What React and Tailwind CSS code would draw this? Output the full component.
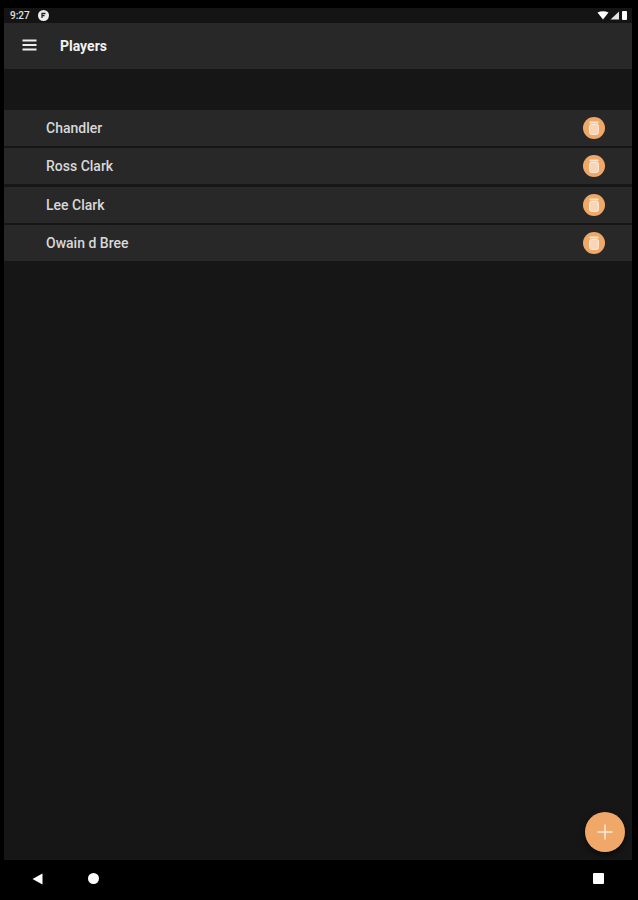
import React from 'react'

const PLAYERS = ['Chandler', 'Ross Clark', 'Lee Clark', 'Owain d Bree']

function DeleteBadge() {
  return (
    <span className="w-[22px] h-[22px] rounded-full bg-[#f0a868] flex items-center justify-center shrink-0">
      <svg width="14" height="16" viewBox="0 0 14 16">
        <rect x="2.5" y="1.5" width="9" height="2" rx="0.6" fill="#fbe6d2" />
        <rect x="2.6" y="4.4" width="8.8" height="10" rx="1.8" fill="#f8d5b6" stroke="#fdeee0" strokeWidth="1" />
      </svg>
    </span>
  )
}

function PlayerRow({ name }) {
  return (
    <div className="h-[36px] bg-[#282828] flex items-center justify-between pl-[42px] pr-[27px]">
      <span className="mt-px text-[14px] text-[#d8d8d8] font-medium">{name}</span>
      <DeleteBadge />
    </div>
  )
}

export default function App() {
  return (
    <div className="relative w-[638px] h-[900px] bg-black flex flex-col overflow-hidden font-['Roboto',sans-serif]">
      <div className="h-[8px] shrink-0" />
      <div className="flex-1 flex flex-col ml-[4px] mr-[6px] bg-[#161616] min-h-0">
        {/* Status bar */}
        <div className="h-[15px] shrink-0 flex items-center justify-between pl-[6px] pr-[5px] bg-[#141414]">
          <div className="flex items-center gap-[8px]">
            <span className="text-[10px] leading-none font-medium text-[#e0e0e0]">9:27</span>
            <span className="w-[11px] h-[11px] rounded-full bg-[#eeeeee] flex items-center justify-center">
              <svg width="7" height="7" viewBox="0 0 7 7">
                <path d="M2 6V1.5h3.5M2 3.6h2.6" stroke="#222222" strokeWidth="1.3" fill="none" />
              </svg>
            </span>
          </div>
          <div className="flex items-center gap-[1px]">
            <svg width="12" height="9" viewBox="0 0 12 9">
              <path d="M0.5 1.5Q6 -1 11.5 1.5L6 8.5Z" fill="#ffffff" />
            </svg>
            <svg width="9" height="9" viewBox="0 0 9 9">
              <path d="M9 0.5V8.5H0.5Z" fill="#e4e4e4" />
            </svg>
            <span className="ml-[2px] w-[5px] h-[9px] rounded-[1px] bg-white" />
          </div>
        </div>

        {/* App bar */}
        <header className="h-[46px] shrink-0 bg-[#282828] flex items-center pl-[18px]">
          <svg width="15" height="12" viewBox="0 0 15 12" className="-mt-[2px]">
            <path d="M0.5 1.5h14M0.5 6h14M0.5 10.5h14" stroke="#eeeeee" strokeWidth="2" />
          </svg>
          <h1 className="mt-px ml-[23px] text-[14px] font-bold text-[#f2f2f2]">Players</h1>
        </header>

        {/* Player list */}
        <div className="mt-[41px] flex flex-col gap-[2.33px]">
          {PLAYERS.map((name) => (
            <PlayerRow key={name} name={name} />
          ))}
        </div>
      </div>

      {/* Nav bar */}
      <nav className="h-[40px] shrink-0 flex items-center pl-[32px] pr-[34px] pb-[3px]">
        <svg width="11" height="12" viewBox="0 0 11 12">
          <path d="M0.5 6L10.5 0.5V11.5Z" fill="#ffffff" />
        </svg>
        <span className="ml-[45px] w-[11px] h-[11px] rounded-full bg-white" />
        <span className="ml-auto w-[11px] h-[11px] rounded-[1px] bg-white" />
      </nav>

      {/* FAB */}
      <button className="absolute left-[585px] top-[812px] w-[40px] h-[40px] rounded-full bg-[#f0a868] flex items-center justify-center shadow-[0_3px_6px_rgba(0,0,0,0.6)]">
        <svg width="16" height="16" viewBox="0 0 16 16">
          <path d="M8 0.5V15.5M0.5 8H15.5" stroke="#fbeadb" strokeWidth="1.6" />
        </svg>
      </button>
    </div>
  )
}
